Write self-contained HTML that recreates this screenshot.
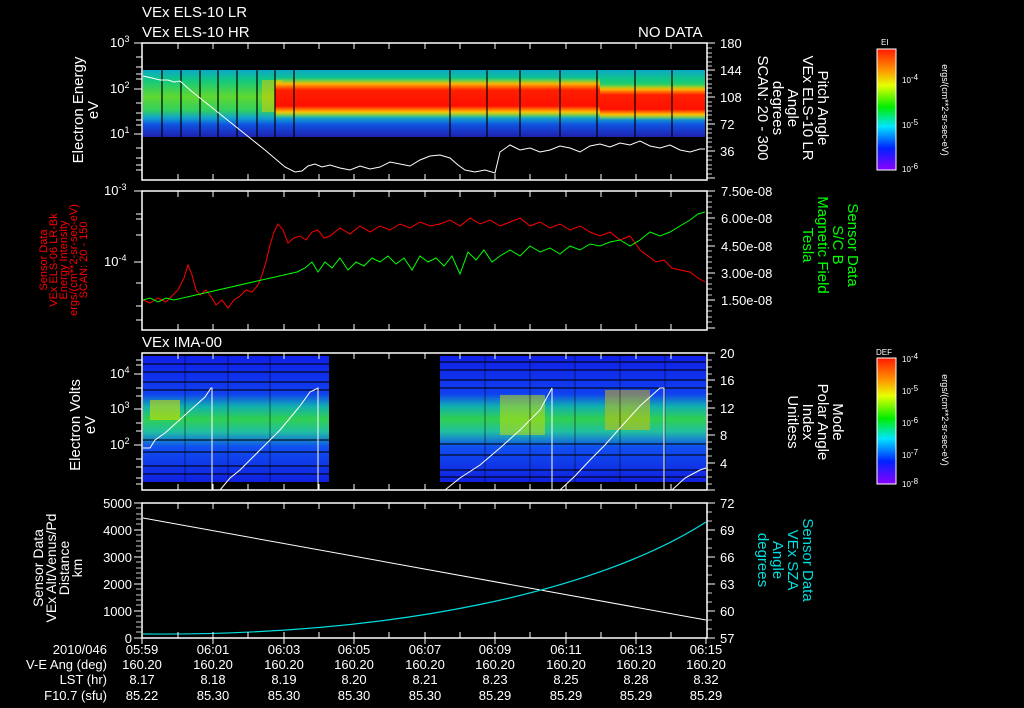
<!DOCTYPE html>
<html><head><meta charset="utf-8"><style>
html,body{margin:0;padding:0;background:#000;width:1024px;height:708px;overflow:hidden}
svg{display:block}
text{font-family:"Liberation Sans",sans-serif;fill:#fff;font-size:13px}
</style></head><body>
<svg width="1024" height="708" viewBox="0 0 1024 708">
<defs>
<linearGradient id="cb" x1="0" y1="0" x2="0" y2="1">
<stop offset="0" stop-color="#ff1a00"/><stop offset="0.18" stop-color="#ff9900"/><stop offset="0.3" stop-color="#e6ff00"/><stop offset="0.48" stop-color="#00ee00"/><stop offset="0.64" stop-color="#00e5ff"/><stop offset="0.82" stop-color="#0022ff"/><stop offset="1" stop-color="#8a00ff"/>
</linearGradient>
<linearGradient id="b1" x1="0" y1="0" x2="0" y2="1">
<stop offset="0" stop-color="#0aa8c8"/><stop offset="0.15" stop-color="#10c880"/><stop offset="0.4" stop-color="#60d830"/><stop offset="0.6" stop-color="#30d060"/><stop offset="0.72" stop-color="#10a0d0"/><stop offset="0.82" stop-color="#1050e0"/><stop offset="1" stop-color="#2020b0"/>
</linearGradient>
<linearGradient id="r1" x1="0" y1="0" x2="0" y2="1">
<stop offset="0" stop-color="#e0e000" stop-opacity="0"/><stop offset="0.15" stop-color="#ffb000"/><stop offset="0.3" stop-color="#ff2000"/><stop offset="0.7" stop-color="#ff1000"/><stop offset="0.85" stop-color="#ffc000"/><stop offset="1" stop-color="#c0ff00" stop-opacity="0"/>
</linearGradient>
<linearGradient id="b3" x1="0" y1="0" x2="0" y2="1">
<stop offset="0" stop-color="#1020e8"/><stop offset="0.3" stop-color="#1040f0"/><stop offset="0.4" stop-color="#10b0b0"/><stop offset="0.5" stop-color="#30d050"/><stop offset="0.6" stop-color="#20c0a0"/><stop offset="0.72" stop-color="#1050f0"/><stop offset="1" stop-color="#1020e0"/>
</linearGradient>
</defs>

<text x="142" y="17" style="font-size:15px">VEx ELS-10 LR</text>
<text x="142" y="37" style="font-size:15px">VEx ELS-10 HR</text>
<text x="638" y="37" style="font-size:15px">NO DATA</text>
<text x="142" y="347" style="font-size:15px">VEx IMA-00</text>

<!-- Panel 1 spectrogram -->
<rect x="143" y="70" width="562" height="67" fill="url(#b1)"/>
<rect x="262" y="80" width="20" height="32" fill="#e0d000" opacity="0.5"/>
<rect x="275" y="78" width="325" height="40" fill="url(#r1)"/>
<rect x="600" y="84" width="105" height="36" fill="url(#r1)"/>
<g stroke="#000" stroke-width="1.2">
<line x1="162" y1="70" x2="162" y2="137"/><line x1="181" y1="70" x2="181" y2="137"/><line x1="200" y1="70" x2="200" y2="137"/><line x1="218" y1="70" x2="218" y2="137"/><line x1="237" y1="70" x2="237" y2="137"/><line x1="257" y1="70" x2="257" y2="137"/><line x1="275" y1="70" x2="275" y2="137"/><line x1="294" y1="70" x2="294" y2="137"/><line x1="450" y1="70" x2="450" y2="137"/><line x1="487" y1="70" x2="487" y2="137"/><line x1="520" y1="70" x2="520" y2="137"/><line x1="560" y1="70" x2="560" y2="137"/><line x1="597" y1="70" x2="597" y2="137"/><line x1="635" y1="70" x2="635" y2="137"/><line x1="672" y1="70" x2="672" y2="137"/>
</g>
<polyline fill="none" stroke="#fff" stroke-width="1" points="143,76 152,78 160,80 168,80 174,82 180,81 190,90 210,106 240,130 265,150 285,167 295,172 302,171 308,166 315,164 322,167 330,165 340,168 350,170 360,166 370,169 380,167 390,162 400,164 410,166 420,160 430,156 440,155 450,158 458,165 465,170 475,172 485,170 495,173 500,152 510,145 520,150 530,148 540,152 550,150 560,146 570,148 580,152 590,146 600,144 610,147 620,143 630,145 640,141 650,146 660,148 670,145 680,150 690,152 700,149 705,149"/>

<!-- Panel 2 lines -->
<polyline fill="none" stroke="#f00" stroke-width="1" points="143,300 150,303 158,298 166,302 172,296 178,290 184,278 188,265 192,275 196,290 200,295 206,290 212,298 216,305 222,300 228,308 234,300 240,296 246,290 252,292 258,285 262,275 266,262 270,245 274,232 278,224 283,230 288,243 294,238 300,236 306,240 312,232 318,230 324,238 330,236 340,228 350,234 360,226 370,232 380,226 390,230 400,224 410,228 420,222 430,226 440,224 450,220 460,226 470,218 480,224 490,220 500,226 510,222 520,218 530,226 540,222 550,228 560,224 570,230 580,226 590,232 600,236 610,232 620,240 630,236 640,250 648,256 656,262 664,260 672,268 680,270 690,272 698,278 705,282"/>
<polyline fill="none" stroke="#0f0" stroke-width="1" points="143,300 150,298 158,302 166,298 174,300 297,272 305,268 312,262 318,272 325,262 332,268 340,258 348,270 356,262 364,266 372,258 380,262 388,256 396,264 404,258 412,270 420,256 428,262 436,258 444,266 452,256 460,274 468,252 476,260 484,250 492,262 500,256 510,250 520,256 530,246 540,252 550,248 560,254 570,246 580,250 590,244 600,246 610,242 620,240 630,246 640,240 650,232 660,236 670,232 680,226 690,220 698,214 705,212"/>

<!-- Panel 3 spectrogram -->
<rect x="143" y="356" width="186" height="126" fill="url(#b3)"/>
<rect x="440" y="356" width="266" height="126" fill="url(#b3)"/>
<rect x="150" y="400" width="30" height="20" fill="#d0e000" opacity="0.6"/>
<rect x="500" y="395" width="45" height="40" fill="#d0e000" opacity="0.5"/>
<rect x="605" y="390" width="45" height="40" fill="#e0c000" opacity="0.5"/>
<g stroke="#000" stroke-width="1.5" opacity="0.7">
<line x1="143" y1="364" x2="329" y2="364"/><line x1="143" y1="372" x2="329" y2="372"/><line x1="143" y1="382" x2="329" y2="382"/><line x1="143" y1="390" x2="329" y2="390"/><line x1="143" y1="440" x2="329" y2="440"/><line x1="143" y1="452" x2="329" y2="452"/><line x1="143" y1="466" x2="329" y2="466"/><line x1="143" y1="474" x2="329" y2="474"/>
<line x1="440" y1="362" x2="706" y2="362"/><line x1="440" y1="370" x2="706" y2="370"/><line x1="440" y1="380" x2="706" y2="380"/><line x1="440" y1="388" x2="706" y2="388"/><line x1="440" y1="444" x2="706" y2="444"/><line x1="440" y1="455" x2="706" y2="455"/><line x1="440" y1="470" x2="706" y2="470"/><line x1="440" y1="477" x2="706" y2="477"/>
</g>
<g stroke="#000" stroke-width="1" opacity="0.5">
<line x1="185" y1="356" x2="185" y2="482"/><line x1="228" y1="356" x2="228" y2="482"/><line x1="270" y1="356" x2="270" y2="482"/><line x1="485" y1="356" x2="485" y2="482"/><line x1="530" y1="356" x2="530" y2="482"/><line x1="575" y1="356" x2="575" y2="482"/><line x1="620" y1="356" x2="620" y2="482"/><line x1="665" y1="356" x2="665" y2="482"/>
</g>
<g fill="none" stroke="#fff" stroke-width="1">
<polyline points="143,448 150,448 155,440 165,433 175,424 185,415 195,406 205,397 211,388 212,388 212,490"/>
<polyline points="220,490 230,478 240,470 250,460 260,450 270,440 280,430 290,418 300,406 310,392 318,388 318,490"/>
<polyline points="445,490 460,478 480,465 500,448 520,430 540,410 552,388 552,490"/>
<polyline points="560,490 575,476 590,460 605,445 620,428 640,406 660,388 664,388 664,490"/>
<polyline points="672,490 685,478 700,470 706,468"/>
</g>

<path d="M143,518 Q420,568 706,620" fill="none" stroke="#fff" stroke-width="1"/>
<path d="M143,634 C400,636 600,590 706,522" fill="none" stroke="#00e0e0" stroke-width="1.2"/>

<g fill="none" stroke="#fff" stroke-width="1.5">
<rect x="142" y="43" width="565" height="137"/>
<rect x="142" y="191" width="565" height="139"/>
<rect x="142" y="353" width="565" height="137"/>
<rect x="142" y="503" width="565" height="135"/>
</g>
<g stroke="#fff" stroke-width="1">
<path d="M178,43v6M213,43v6M248,43v6M284,43v6M319,43v6M354,43v6M389,43v6M425,43v6M460,43v6M495,43v6M530,43v6M566,43v6M601,43v6M636,43v6M671,43v6
M178,180v-6M213,180v-6M248,180v-6M284,180v-6M319,180v-6M354,180v-6M389,180v-6M425,180v-6M460,180v-6M495,180v-6M530,180v-6M566,180v-6M601,180v-6M636,180v-6M671,180v-6
M178,191v6M213,191v6M248,191v6M284,191v6M319,191v6M354,191v6M389,191v6M425,191v6M460,191v6M495,191v6M530,191v6M566,191v6M601,191v6M636,191v6M671,191v6
M178,330v-6M213,330v-6M248,330v-6M284,330v-6M319,330v-6M354,330v-6M389,330v-6M425,330v-6M460,330v-6M495,330v-6M530,330v-6M566,330v-6M601,330v-6M636,330v-6M671,330v-6
M178,353v6M213,353v6M248,353v6M284,353v6M319,353v6M354,353v6M389,353v6M425,353v6M460,353v6M495,353v6M530,353v6M566,353v6M601,353v6M636,353v6M671,353v6
M178,490v-6M213,490v-6M248,490v-6M284,490v-6M319,490v-6M354,490v-6M389,490v-6M425,490v-6M460,490v-6M495,490v-6M530,490v-6M566,490v-6M601,490v-6M636,490v-6M671,490v-6
M178,503v6M213,503v6M248,503v6M284,503v6M319,503v6M354,503v6M389,503v6M425,503v6M460,503v6M495,503v6M530,503v6M566,503v6M601,503v6M636,503v6M671,503v6
M178,638v-6M213,638v-6M248,638v-6M284,638v-6M319,638v-6M354,638v-6M389,638v-6M425,638v-6M460,638v-6M495,638v-6M530,638v-6M566,638v-6M601,638v-6M636,638v-6M671,638v-6
M142,638v6M213,638v6M284,638v6M354,638v6M425,638v6M495,638v6M566,638v6M636,638v6M706,638v6
M134,43h8M134,89h8M134,134h8M136,57h6M136,67h6M136,74h6M136,79h6M136,103h6M136,113h6M136,120h6M136,125h6M136,148h6M136,158h6M136,165h6M136,170h6
M134,191h8M134,262h8M136,235h6M136,219h6M136,214h6M136,283h6M136,306h6M136,320h6
M134,374h8M134,409h8M134,445h8M136,360h6M136,365h6M136,388h6M136,396h6M136,423h6M136,431h6M136,459h6M136,467h6M136,478h6M136,484h6
M134,503h8M134,530h8M134,557h8M134,584h8M134,611h8M134,638h8
M707,43h8M707,70h8M707,97h8M707,124h8M707,151h8M707,178h8
M707,191h8M707,218h8M707,246h8M707,273h8M707,300h8M707,328h8
M707,353h8M707,380h8M707,408h8M707,435h8M707,463h8M707,490h8
M707,503h8M707,530h8M707,557h8M707,584h8M707,611h8M707,638h8"/>
</g>
<g stroke="#fff" stroke-width="1" opacity="0.8">
<path d="M707,48h5M707,53h5M707,57h5M707,62h5M707,66h5M707,75h5M707,79h5M707,84h5M707,88h5M707,93h5M707,102h5M707,106h5M707,111h5M707,115h5M707,120h5M707,129h5M707,133h5M707,138h5M707,142h5M707,147h5M707,156h5M707,160h5M707,165h5M707,169h5M707,174h5
M707,196h5M707,202h5M707,207h5M707,213h5M707,224h5M707,229h5M707,235h5M707,240h5M707,251h5M707,257h5M707,262h5M707,268h5M707,278h5M707,284h5M707,289h5M707,295h5M707,306h5M707,311h5M707,317h5M707,322h5
M707,360h5M707,367h5M707,374h5M707,387h5M707,394h5M707,401h5M707,415h5M707,422h5M707,429h5M707,442h5M707,449h5M707,456h5M707,470h5M707,477h5M707,484h5
M136,508h5M136,514h5M136,519h5M136,524h5M136,535h5M136,541h5M136,546h5M136,551h5M136,562h5M136,568h5M136,573h5M136,578h5M136,589h5M136,595h5M136,600h5M136,605h5M136,616h5M136,622h5M136,627h5M136,632h5
M707,512h5M707,521h5M707,539h5M707,548h5M707,566h5M707,575h5M707,593h5M707,602h5M707,620h5M707,629h5"/>
</g>

<text x="110" y="47">10<tspan dy="-5" style="font-size:9px">3</tspan></text>
<text x="110" y="93">10<tspan dy="-5" style="font-size:9px">2</tspan></text>
<text x="110" y="138">10<tspan dy="-5" style="font-size:9px">1</tspan></text>
<text x="104" y="195">10<tspan dy="-5" style="font-size:9px">-3</tspan></text>
<text x="104" y="266">10<tspan dy="-5" style="font-size:9px">-4</tspan></text>
<text x="110" y="378">10<tspan dy="-5" style="font-size:9px">4</tspan></text>
<text x="110" y="413">10<tspan dy="-5" style="font-size:9px">3</tspan></text>
<text x="110" y="449">10<tspan dy="-5" style="font-size:9px">2</tspan></text>
<g text-anchor="end">
<text x="132" y="508">5000</text><text x="132" y="535">4000</text><text x="132" y="562">3000</text><text x="132" y="589">2000</text><text x="132" y="616">1000</text><text x="132" y="643">0</text>
</g>
<g>
<text x="720" y="48">180</text><text x="720" y="75">144</text><text x="720" y="102">108</text><text x="720" y="129">72</text><text x="720" y="156">36</text>
<text x="721" y="196">7.50e-08</text><text x="721" y="223">6.00e-08</text><text x="721" y="251">4.50e-08</text><text x="721" y="278">3.00e-08</text><text x="721" y="305">1.50e-08</text>
<text x="720" y="358">20</text><text x="720" y="385">16</text><text x="720" y="413">12</text><text x="720" y="440">8</text><text x="720" y="468">4</text>
<text x="720" y="508">72</text><text x="720" y="535">69</text><text x="720" y="562">66</text><text x="720" y="589">63</text><text x="720" y="616">60</text><text x="720" y="643">57</text>
</g>

<g text-anchor="middle">
<text transform="translate(83,110) rotate(-90)" style="font-size:15px">Electron Energy</text>
<text transform="translate(98,110) rotate(-90)" style="font-size:15px">eV</text>
<text transform="translate(80,425) rotate(-90)" style="font-size:15px">Electron Volts</text>
<text transform="translate(95,425) rotate(-90)" style="font-size:15px">eV</text>
<text transform="translate(43,568) rotate(-90)" style="font-size:14px">Sensor Data</text>
<text transform="translate(56,568) rotate(-90)" style="font-size:14px">VEx Alt/Venus/Pd</text>
<text transform="translate(69,568) rotate(-90)" style="font-size:14px">Distance</text>
<text transform="translate(82,568) rotate(-90)" style="font-size:14px">km</text>
</g>
<g text-anchor="middle">
<text transform="translate(47,260) rotate(-90)" style="fill:#f00;font-size:11px">Sensor Data</text>
<text transform="translate(57,260) rotate(-90)" style="fill:#f00;font-size:11px">VEx ELS-06 LR-Bk</text>
<text transform="translate(67,260) rotate(-90)" style="fill:#f00;font-size:11px">Energy Intensity</text>
<text transform="translate(77,260) rotate(-90)" style="fill:#f00;font-size:11px">ergs/(cm**2-sr-sec-eV)</text>
<text transform="translate(87,260) rotate(-90)" style="fill:#f00;font-size:11px">SCAN: 20 - 150</text>
</g>

<g text-anchor="middle">
<text transform="translate(818,108) rotate(90)" style="font-size:15px">Pitch Angle</text>
<text transform="translate(803,108) rotate(90)" style="font-size:15px">VEx ELS-10 LR</text>
<text transform="translate(788,108) rotate(90)" style="font-size:15px">Angle</text>
<text transform="translate(773,108) rotate(90)" style="font-size:15px">degrees</text>
<text transform="translate(758,108) rotate(90)" style="font-size:15px">SCAN: 20 - 300</text>
<text transform="translate(848,245) rotate(90)" style="fill:#0f0;font-size:15px">Sensor Data</text>
<text transform="translate(833,245) rotate(90)" style="fill:#0f0;font-size:15px">S/C B</text>
<text transform="translate(818,245) rotate(90)" style="fill:#0f0;font-size:15px">Magnetic Field</text>
<text transform="translate(803,245) rotate(90)" style="fill:#0f0;font-size:15px">Tesla</text>
<text transform="translate(833,422) rotate(90)" style="font-size:15px">Mode</text>
<text transform="translate(818,422) rotate(90)" style="font-size:15px">Polar Angle</text>
<text transform="translate(803,422) rotate(90)" style="font-size:15px">Index</text>
<text transform="translate(788,422) rotate(90)" style="font-size:15px">Unitless</text>
<text transform="translate(803,560) rotate(90)" style="fill:#0dd;font-size:15px">Sensor Data</text>
<text transform="translate(788,560) rotate(90)" style="fill:#0dd;font-size:15px">VEx SZA</text>
<text transform="translate(773,560) rotate(90)" style="fill:#0dd;font-size:15px">Angle</text>
<text transform="translate(758,560) rotate(90)" style="fill:#0dd;font-size:15px">degrees</text>
</g>

<rect x="877" y="49" width="19" height="121" fill="url(#cb)" stroke="#fff" stroke-width="1"/>
<text x="881" y="45" style="font-size:8px">EI</text>
<text x="902" y="83" style="font-size:8px">10<tspan dy="-3">-4</tspan></text>
<text x="902" y="128" style="font-size:8px">10<tspan dy="-3">-5</tspan></text>
<text x="902" y="172" style="font-size:8px">10<tspan dy="-3">-6</tspan></text>
<text transform="translate(942,110) rotate(90)" text-anchor="middle" style="font-size:9px">ergs/(cm**2-sr-sec-eV)</text>
<rect x="877" y="358" width="19" height="126" fill="url(#cb)" stroke="#fff" stroke-width="1"/>
<text x="876" y="355" style="font-size:8px">DEF</text>
<text x="902" y="362" style="font-size:8px">10<tspan dy="-3">-4</tspan></text>
<text x="902" y="394" style="font-size:8px">10<tspan dy="-3">-5</tspan></text>
<text x="902" y="426" style="font-size:8px">10<tspan dy="-3">-6</tspan></text>
<text x="902" y="458" style="font-size:8px">10<tspan dy="-3">-7</tspan></text>
<text x="902" y="487" style="font-size:8px">10<tspan dy="-3">-8</tspan></text>
<text transform="translate(942,420) rotate(90)" text-anchor="middle" style="font-size:9px">ergs/(cm**2-sr-sec-eV)</text>

<g text-anchor="end">
<text x="107" y="654">2010/046</text>
<text x="107" y="669">V-E Ang (deg)</text>
<text x="107" y="684">LST (hr)</text>
<text x="107" y="700">F10.7 (sfu)</text>
</g>
<g text-anchor="middle">
<text x="142" y="654">05:59</text><text x="213" y="654">06:01</text><text x="284" y="654">06:03</text><text x="354" y="654">06:05</text><text x="425" y="654">06:07</text><text x="495" y="654">06:09</text><text x="566" y="654">06:11</text><text x="636" y="654">06:13</text><text x="706" y="654">06:15</text>
<text x="142" y="669">160.20</text><text x="213" y="669">160.20</text><text x="284" y="669">160.20</text><text x="354" y="669">160.20</text><text x="425" y="669">160.20</text><text x="495" y="669">160.20</text><text x="566" y="669">160.20</text><text x="636" y="669">160.20</text><text x="706" y="669">160.20</text>
<text x="142" y="684">8.17</text><text x="213" y="684">8.18</text><text x="284" y="684">8.19</text><text x="354" y="684">8.20</text><text x="425" y="684">8.21</text><text x="495" y="684">8.23</text><text x="566" y="684">8.25</text><text x="636" y="684">8.28</text><text x="706" y="684">8.32</text>
<text x="142" y="700">85.22</text><text x="213" y="700">85.30</text><text x="284" y="700">85.30</text><text x="354" y="700">85.30</text><text x="425" y="700">85.30</text><text x="495" y="700">85.29</text><text x="566" y="700">85.29</text><text x="636" y="700">85.29</text><text x="706" y="700">85.29</text>
</g>
</svg>
</body></html>
